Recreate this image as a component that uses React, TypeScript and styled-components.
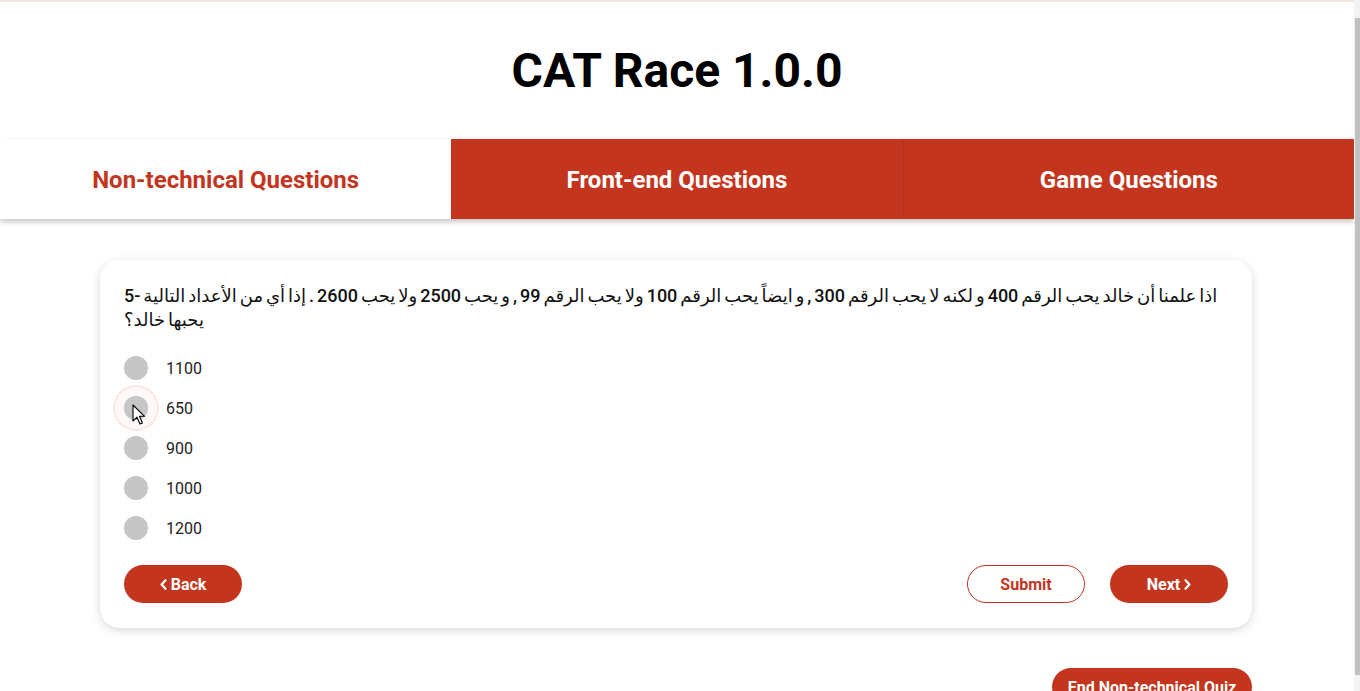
import React from "react";
import styled, { createGlobalStyle, css } from "styled-components";

const RED = "#c3351e";

const Global = createGlobalStyle`
  html, body { margin: 0; padding: 0; background: #fff; overflow-x: hidden; }
  body {
    font-family: Roboto, "Liberation Sans", Arial, sans-serif;
    color: #111;
  }
`;

const Page = styled.div`
  width: 1354px;
  border-top: 2px solid #f3e6e2;
  box-sizing: border-box;
`;

const ScrollTrack = styled.div`
  position: fixed;
  top: 0;
  right: 0;
  width: 6px;
  height: 100vh;
  background: #f3f3f3;
`;

const ScrollThumb = styled.div`
  position: absolute;
  top: 18px;
  bottom: 16px;
  left: 1px;
  right: 0;
  background: #c1c1c1;
`;

const Header = styled.header`
  height: 137px;
  display: flex;
  align-items: center;
  justify-content: center;
`;

const Title = styled.h1`
  margin: 0;
  font-family: Roboto, sans-serif;
  font-weight: 700;
  font-size: 48px;
  color: #000;
`;

const TabBar = styled.nav`
  display: grid;
  grid-template-columns: repeat(3, 1fr);
  height: 80px;
  box-shadow: 0 3px 5px rgba(0, 0, 0, 0.22);
  position: relative;
`;

const Tab = styled.div<{ $active?: boolean; $divider?: boolean }>`
  display: flex;
  align-items: center;
  justify-content: center;
  padding-top: 2px;
  font-family: Roboto, sans-serif;
  font-weight: 700;
  font-size: 24px;
  ${(p) =>
    p.$active
      ? css`
          background: #fff;
          color: ${RED};
        `
      : css`
          background: ${RED};
          color: #fff;
        `}
  ${(p) =>
    p.$divider &&
    css`
      border-left: 1px solid rgba(0, 0, 0, 0.07);
    `}
`;

const Main = styled.main`
  padding: 41px 0 10px 100px;
`;

const Card = styled.section`
  width: 1152px;
  box-sizing: border-box;
  background: #fff;
  border-radius: 20px;
  box-shadow: 0 2px 10px rgba(0, 0, 0, 0.16);
  padding: 24px 24px 25px;
`;

const Question = styled.p`
  margin: 0 0 24px;
  font-family: Roboto, "DejaVu Sans", sans-serif;
  font-size: 18px;
  font-weight: 500;
  line-height: 24px;
  word-spacing: -1.5px;
  color: #111;
`;

const Options = styled.ul`
  list-style: none;
  margin: 0;
  padding: 0;
  display: flex;
  flex-direction: column;
  gap: 16px;
`;

const Option = styled.li`
  display: flex;
  align-items: center;
  gap: 18px;
  height: 24px;
  position: relative;
`;

const Radio = styled.span<{ $hover?: boolean }>`
  width: 24px;
  height: 24px;
  border-radius: 50%;
  background: #c6c6c6;
  flex: none;
  position: relative;
  ${(p) =>
    p.$hover &&
    css`
      &::before {
        content: "";
        position: absolute;
        left: -11px;
        top: -11px;
        width: 46px;
        height: 46px;
        border-radius: 50%;
        border: 2px solid rgba(235, 130, 130, 0.17);
        box-sizing: border-box;
        background: rgba(255, 238, 238, 0.35);
      }
      &::after {
        content: "";
        position: absolute;
        inset: 0;
        border-radius: 50%;
        background: #c6c6c6;
      }
    `}
`;

const Label = styled.span`
  font-family: Roboto, sans-serif;
  font-size: 16px;
  color: #222;
`;

const Cursor = styled.svg`
  position: absolute;
  left: 8px;
  top: 8px;
  z-index: 2;
`;

const Actions = styled.div`
  margin-top: 25px;
  display: flex;
  align-items: center;
`;

const Spacer = styled.div`
  flex: 1;
`;

const Button = styled.button<{ $outline?: boolean }>`
  width: 118px;
  height: 38px;
  border-radius: 19px;
  box-sizing: border-box;
  font-family: Roboto, sans-serif;
  font-weight: 700;
  font-size: 16px;
  display: inline-flex;
  align-items: center;
  justify-content: center;
  gap: 4px;
  cursor: pointer;
  padding: 0;
  ${(p) =>
    p.$outline
      ? css`
          background: #fff;
          color: ${RED};
          border: 1px solid ${RED};
        `
      : css`
          background: ${RED};
          color: #fff;
          border: none;
        `}
`;

const ButtonGap = styled.div`
  width: 25px;
`;

const Footer = styled.div`
  width: 1152px;
  margin-top: 40px;
  display: flex;
  justify-content: flex-end;
`;

const EndButton = styled(Button)`
  width: 200px;
`;

const Chevron = ({ dir }: { dir: "left" | "right" }) => (
  <svg width="7" height="11" viewBox="0 0 7 11" fill="none">
    <path
      d={dir === "left" ? "M5.5 1.2 L1.6 5.5 L5.5 9.8" : "M1.5 1.2 L5.4 5.5 L1.5 9.8"}
      stroke="currentColor"
      strokeWidth="2.2"
      strokeLinecap="round"
      strokeLinejoin="round"
    />
  </svg>
);

const options = ["1100", "650", "900", "1000", "1200"];

export default function App() {
  return (
    <>
      <Global />
      <Page>
        <Header>
          <Title>CAT Race 1.0.0</Title>
        </Header>
        <TabBar>
          <Tab $active>Non-technical Questions</Tab>
          <Tab>Front-end Questions</Tab>
          <Tab $divider>Game Questions</Tab>
        </TabBar>
        <Main>
          <Card>
            <Question>
              5- اذا علمنا أن خالد يحب الرقم 400 و لكنه لا يحب الرقم 300 , و ايضاً يحب الرقم 100 ولا يحب الرقم 99 , و يحب 2500 ولا يحب 2600 . إذا أي من الأعداد التالية يحبها خالد؟
            </Question>
            <Options>
              {options.map((o, i) => (
                <Option key={o}>
                  <Radio $hover={i === 1} />
                  <Label>{o}</Label>
                  {i === 1 && (
                    <Cursor width="14" height="22" viewBox="0 0 14 22">
                      <path
                        d="M1 1 L1 17 L5 13.2 L8 20 L10.4 19 L7.5 12.3 L12.6 12.3 Z"
                        fill="#fff"
                        stroke="#000"
                        strokeWidth="1.1"
                        strokeLinejoin="round"
                      />
                    </Cursor>
                  )}
                </Option>
              ))}
            </Options>
            <Actions>
              <Button>
                <Chevron dir="left" />
                Back
              </Button>
              <Spacer />
              <Button $outline>Submit</Button>
              <ButtonGap />
              <Button>
                Next
                <Chevron dir="right" />
              </Button>
            </Actions>
          </Card>
          <Footer>
            <EndButton>End Non-technical Quiz</EndButton>
          </Footer>
        </Main>
      </Page>
      <ScrollTrack>
        <ScrollThumb />
      </ScrollTrack>
    </>
  );
}
